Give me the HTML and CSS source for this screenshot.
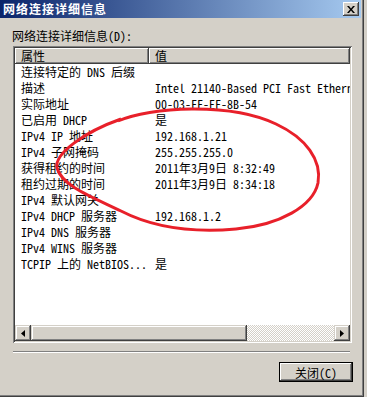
FILE: index.html
```html
<!DOCTYPE html>
<html lang="zh-CN">
<head>
    <meta charset="UTF-8">
    <title>网络连接详细信息</title>
    <link rel="stylesheet" href="styles.css">
</head>
<body>
  <div class="window">
    <div class="titlebar">
      <span class="title">网络连接详细信息</span>
      <div class="close-btn">
        <svg width="8" height="7" viewBox="0 0 8 7"><path d="M0 0h2l2 2.5L6 0h2L5 3.5 8 7H6L4 4.5 2 7H0l3-3.5z" fill="#000"/></svg>
      </div>
    </div>

    <div class="content">
      <div class="label">网络连接详细信息(D):</div>

      <div class="listbox">
        <div class="list-header">
          <div class="head-cell col-name">属性</div>
          <div class="head-cell col-value">值</div>
        </div>
        <div class="list-rows">
          <div class="row"><span>连接特定的 DNS 后缀</span><span></span></div>
          <div class="row"><span>描述</span><span>Intel 21140-Based PCI Fast Ethernet Adapter (Emulated)</span></div>
          <div class="row"><span>实际地址</span><span>00-03-FF-EF-8B-54</span></div>
          <div class="row"><span>已启用 DHCP</span><span>是</span></div>
          <div class="row"><span>IPv4 IP 地址</span><span>192.168.1.21</span></div>
          <div class="row"><span>IPv4 子网掩码</span><span>255.255.255.0</span></div>
          <div class="row"><span>获得租约的时间</span><span>2011年3月9日 8:32:49</span></div>
          <div class="row"><span>租约过期的时间</span><span>2011年3月9日 8:34:18</span></div>
          <div class="row"><span>IPv4 默认网关</span><span></span></div>
          <div class="row"><span>IPv4 DHCP 服务器</span><span>192.168.1.2</span></div>
          <div class="row"><span>IPv4 DNS 服务器</span><span></span></div>
          <div class="row"><span>IPv4 WINS 服务器</span><span></span></div>
          <div class="row"><span>TCPIP 上的 NetBIOS...</span><span>是</span></div>
        </div>
        <div class="hscroll">
          <div class="arrow-btn">
            <svg width="4" height="7" viewBox="0 0 4 7"><path d="M4 0v7L0 3.5z" fill="#000"/></svg>
          </div>
          <div class="thumb"></div>
          <div class="track"></div>
          <div class="arrow-btn">
            <svg width="4" height="7" viewBox="0 0 4 7"><path d="M0 0v7l4-3.5z" fill="#000"/></svg>
          </div>
        </div>
      </div>

      <div class="separator"></div>

      <div class="button-row">
        <button class="btn-default">关闭(C)</button>
      </div>
    </div>

    <!-- red marker drawn over the screenshot -->
    <svg class="marker" width="367" height="397" viewBox="0 0 367 397">
      <path d="M118 121 C150 107 230 102 276 124 C306 138 322 160 318 183 C313 206 280 225 236 229 C190 233 150 226 121 211 C92 197 62 186 57 168 C54 154 84 132 121 119"
            fill="none" stroke="#e8202a" stroke-width="3"/>
    </svg>
  </div>
</body>
</html>
```

FILE: styles.css
```css
body {
  margin: 0;
  background: #d4d0c8;
  font-family: "Noto Sans Mono CJK SC", "Liberation Mono", "Noto Sans CJK SC", monospace;
  font-size: 12px;
  color: #000;
}

.window {
  position: relative;
  width: 364px;
  height: 397px;
  box-sizing: border-box;
  background: #d4d0c8;
  border-right: 1px solid #404040;
  border-bottom: 1px solid #404040;
  box-shadow: inset -1px -1px #808080;
}

/* title bar */
.titlebar {
  height: 18px;
  margin-right: 2px;
  display: flex;
  align-items: center;
  justify-content: space-between;
  background: linear-gradient(to right, #0a246a, #a6caf0);
}
.title {
  padding-left: 3px;
  color: #fff;
  font-family: "Noto Sans CJK SC", sans-serif;
  font-weight: bold;
  letter-spacing: 1px;
  line-height: 18px;
}
.close-btn {
  width: 16px;
  height: 14px;
  margin-right: 2px;
  box-sizing: border-box;
  display: flex;
  align-items: center;
  justify-content: center;
  background: #d4d0c8;
  box-shadow: inset -1px -1px #404040, inset 1px 1px #fff, inset -2px -2px #808080;
}

.content {
  padding: 0 0 0 13px;
}

.label {
  height: 14px;
  line-height: 14px;
  margin: 11px 0 3px -1px;
  white-space: nowrap;
}

/* list view */
.listbox {
  width: 339px;
  height: 297px;
  box-sizing: border-box;
  padding: 2px;
  display: flex;
  flex-direction: column;
  background: #fff;
  box-shadow: inset 1px 1px #808080, inset -1px -1px #fff, inset 2px 2px #404040, inset -2px -2px #d4d0c8;
}
.list-header {
  display: flex;
  height: 16px;
  flex-shrink: 0;
}
.head-cell {
  height: 16px;
  box-sizing: border-box;
  padding-left: 6px;
  line-height: 15px;
  background: #d4d0c8;
  box-shadow: inset -1px -1px #404040, inset 1px 1px #fff, inset -2px -2px #808080;
}
.col-name { width: 134px; }
.col-value { flex: 1; }

.list-rows {
  flex: 1;
  overflow: hidden;
}
.row {
  display: grid;
  grid-template-columns: 134px 201px;
  height: 16px;
  line-height: 16px;
}
.row span {
  padding-left: 6px;
  white-space: nowrap;
  overflow: hidden;
}

/* horizontal scrollbar */
.hscroll {
  display: flex;
  height: 16px;
  flex-shrink: 0;
}
.arrow-btn, .thumb {
  height: 16px;
  box-sizing: border-box;
  background: #d4d0c8;
  box-shadow: inset -1px -1px #404040, inset 1px 1px #d4d0c8, inset -2px -2px #808080, inset 2px 2px #fff;
}
.arrow-btn {
  width: 16px;
  display: flex;
  align-items: center;
  justify-content: center;
}
.thumb { width: 216px; }
.track {
  flex: 1;
  background: repeating-conic-gradient(#d4d0c8 0 25%, #fff 0 50%) 0 0 / 2px 2px;
}

.separator {
  width: 337px;
  height: 1px;
  margin-top: 8px;
  background: #808080;
  border-bottom: 1px solid #fff;
}

.button-row {
  width: 340px;
  display: flex;
  justify-content: flex-end;
  margin-top: 9px;
}
.btn-default {
  width: 74px;
  height: 20px;
  padding: 0;
  border: 1px solid #000;
  background: #d4d0c8;
  font-family: inherit;
  font-size: 12px;
  color: #000;
  box-shadow: inset -1px -1px #404040, inset 1px 1px #fff, inset -2px -2px #808080;
}

.marker {
  position: absolute;
  top: 0;
  left: 0;
  pointer-events: none;
}
```
